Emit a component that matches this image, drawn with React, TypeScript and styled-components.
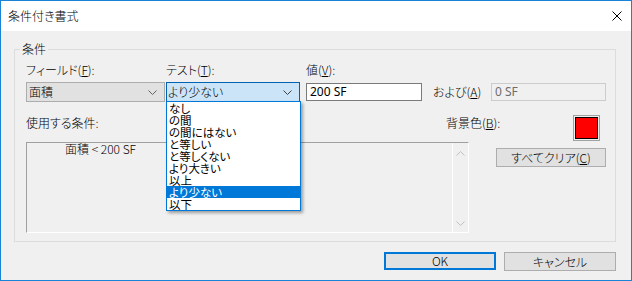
import React from 'react'
import styled, { createGlobalStyle } from 'styled-components'

const GlobalStyle = createGlobalStyle`
  html, body {
    margin: 0;
    padding: 0;
    background: #ffffff;
  }
  body {
    font-family: 'Noto Sans CJK JP', 'Noto Sans', sans-serif;
    font-size: 12px;
    font-weight: 300;
    color: #000000;
    font-feature-settings: 'palt';
  }
  * {
    box-sizing: border-box;
  }
`

const Window = styled.div`
  width: 632px;
  height: 281px;
  border: 1px solid #1883d7;
  background: #f0f0f0;
  display: flex;
  flex-direction: column;
`

const TitleBar = styled.div`
  height: 30px;
  flex: none;
  background: #ffffff;
  display: flex;
  align-items: center;
  justify-content: space-between;
  padding: 0 9px 0 7px;
`

const Title = styled.span`
  line-height: 14px;
`

const Body = styled.div`
  padding: 11px 15px 0 13px;
  display: flex;
  flex-direction: column;
`

const Group = styled.fieldset`
  margin: 0;
  padding: 0;
  border: 1px solid #dcdcdc;
  min-width: 0;
`

const Legend = styled.legend`
  margin-left: 5px;
  padding: 0 2px;
  line-height: 14px;
`

const GroupInner = styled.div`
  padding: 7px 9px 8px 11px;
`

const FieldRow = styled.div`
  display: flex;
  align-items: flex-end;
`

const Field = styled.div<{ $w: number; $ml?: number }>`
  position: relative;
  display: flex;
  flex-direction: column;
  gap: 5px;
  width: ${p => p.$w}px;
  margin-left: ${p => p.$ml ?? 0}px;
`

const Label = styled.div`
  line-height: 14px;
  white-space: nowrap;
`

const InlineLabel = styled.div<{ $w: number; $ml: number }>`
  width: ${p => p.$w}px;
  margin-left: ${p => p.$ml}px;
  height: 20px;
  line-height: 20px;
  white-space: nowrap;
`

const Combo = styled.div<{ $focused?: boolean }>`
  height: 20px;
  display: flex;
  align-items: center;
  justify-content: space-between;
  padding: 0 7px 0 ${p => (p.$focused ? 1 : 2)}px;
  background: ${p => (p.$focused ? '#cce4f7' : '#e1e1e1')};
  border: 1px solid ${p => (p.$focused ? '#0063b1' : '#adadad')};
  line-height: 16px;
`

const TextBox = styled.div<{ $disabled?: boolean }>`
  height: 18px;
  margin: 1px 0;
  padding: 0 3px;
  line-height: 16px;
  background: ${p => (p.$disabled ? '#f0f0f0' : '#ffffff')};
  border: 1px solid ${p => (p.$disabled ? '#cccccc' : '#7a7a7a')};
  color: ${p => (p.$disabled ? '#6d6d6d' : '#000000')};
  font-family: 'Noto Sans', sans-serif;
  font-weight: 400;
`

const DropList = styled.div`
  position: absolute;
  left: 0;
  top: calc(100% - 1px);
  width: 135px;
  background: #ffffff;
  border: 1px solid #0078d7;
  box-shadow: 2px 2px 3px rgba(0, 0, 0, 0.35);
  z-index: 2;
`

const DropItem = styled.div<{ $selected?: boolean }>`
  height: 12px;
  line-height: 12px;
  font-size: 11.5px;
  font-weight: 400;
  padding-left: 2px;
  white-space: nowrap;
  background: ${p => (p.$selected ? '#0078d7' : 'transparent')};
  color: ${p => (p.$selected ? '#ffffff' : '#000000')};
`

const LowerRow = styled.div`
  display: flex;
  align-items: flex-start;
  margin-top: 13px;
`

const UseLabel = styled.div`
  width: 420px;
  margin-top: 1px;
  line-height: 14px;
`

const BgLabel = styled.div`
  flex: 1;
  margin-top: 1px;
  line-height: 14px;
`

const Swatch = styled.div`
  width: 27px;
  height: 26px;
  margin-right: 6px;
  padding: 1px;
  border: 1px solid #a0a0a0;
`

const SwatchFill = styled.div`
  width: 100%;
  height: 100%;
  background: #ff0000;
  border: 1px solid #000000;
`

const ConditionRow = styled.div`
  display: flex;
  align-items: flex-start;
  margin-top: 1px;
`

const ListBox = styled.div`
  width: 443px;
  height: 91px;
  display: flex;
  border-top: 1px solid #a0a0a0;
  border-left: 1px solid #a0a0a0;
  border-right: 1px solid #ffffff;
  border-bottom: 1px solid #ffffff;
`

const ListContent = styled.div`
  flex: 1;
  padding-left: 38px;
  line-height: 12px;
`

const ScrollBar = styled.div`
  width: 16px;
  border-left: 1px solid #ffffff;
  display: flex;
  flex-direction: column;
  justify-content: space-between;
  align-items: center;
  padding: 8px 0 6px;
`

const Button = styled.div<{ $w: number; $default?: boolean }>`
  width: ${p => p.$w}px;
  height: ${p => (p.$default ? 18 : 19)}px;
  display: flex;
  align-items: center;
  justify-content: center;
  background: #e1e1e1;
  border: ${p => (p.$default ? '2px solid #0078d7' : '1px solid #adadad')};
  line-height: 14px;
  white-space: nowrap;
`

const ClearButton = styled(Button)`
  margin-left: 27px;
  margin-top: 6px;
`

const ButtonRow = styled.div`
  display: flex;
  justify-content: flex-end;
  gap: 8px;
  margin-top: 10px;
`

const Chevron = ({ up, color }: { up?: boolean; color: string }) => (
  <svg width="9" height="5" viewBox="0 0 9 5">
    <polyline
      points={up ? '0.5,4.5 4.5,0.5 8.5,4.5' : '0.5,0.5 4.5,4.5 8.5,0.5'}
      fill="none"
      stroke={color}
      strokeWidth="1"
    />
  </svg>
)

const tests = ['なし', 'の間', 'の間にはない', 'と等しい', 'と等しくない', 'より大きい', '以上', 'より少ない', '以下']

export default function App() {
  return (
    <>
      <GlobalStyle />
      <Window>
        <TitleBar>
          <Title>条件付き書式</Title>
          <svg width="10" height="10" viewBox="0 0 10 10">
            <path d="M0.5 0.5 L9.5 9.5 M9.5 0.5 L0.5 9.5" stroke="#000" strokeWidth="1" />
          </svg>
        </TitleBar>
        <Body>
          <Group>
            <Legend>条件</Legend>
            <GroupInner>
              <FieldRow>
                <Field $w={139}>
                  <Label>フィールド(<u>F</u>):</Label>
                  <Combo>
                    <span>面積</span>
                    <Chevron color="#606060" />
                  </Combo>
                </Field>
                <Field $w={134} $ml={1}>
                  <Label>テスト(<u>T</u>):</Label>
                  <Combo $focused>
                    <span>より少ない</span>
                    <Chevron color="#404040" />
                  </Combo>
                  <DropList>
                    {tests.map(t => (
                      <DropItem key={t} $selected={t === 'より少ない'}>
                        {t}
                      </DropItem>
                    ))}
                  </DropList>
                </Field>
                <Field $w={116} $ml={6}>
                  <Label>値(<u>V</u>):</Label>
                  <TextBox>200 SF</TextBox>
                </Field>
                <InlineLabel $w={58} $ml={11}>
                  および(<u>A</u>)
                </InlineLabel>
                <Field $w={115}>
                  <TextBox $disabled>0 SF</TextBox>
                </Field>
              </FieldRow>
              <LowerRow>
                <UseLabel>使用する条件:</UseLabel>
                <BgLabel>背景色(<u>B</u>):</BgLabel>
                <Swatch>
                  <SwatchFill />
                </Swatch>
              </LowerRow>
              <ConditionRow>
                <ListBox>
                  <ListContent>面積 &lt; 200 SF</ListContent>
                  <ScrollBar>
                    <Chevron up color="#c0c0c0" />
                    <Chevron color="#c0c0c0" />
                  </ScrollBar>
                </ListBox>
                <ClearButton $w={110}>すべてクリア(<u>C</u>)</ClearButton>
              </ConditionRow>
            </GroupInner>
          </Group>
          <ButtonRow>
            <Button $w={112} $default>OK</Button>
            <Button $w={112}>キャンセル</Button>
          </ButtonRow>
        </Body>
      </Window>
    </>
  )
}
